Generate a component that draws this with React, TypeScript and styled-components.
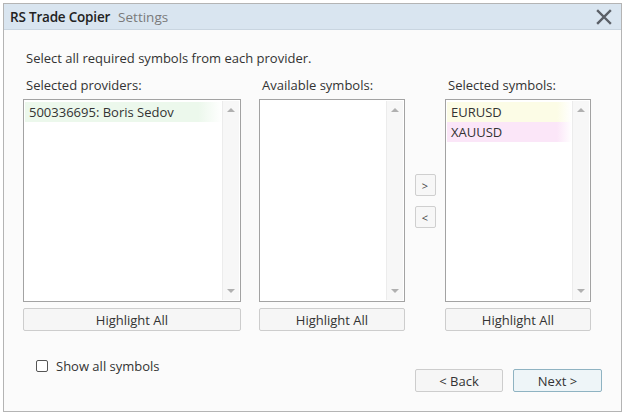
import React from "react";
import styled, { createGlobalStyle } from "styled-components";

const Global = createGlobalStyle`
  html, body { margin: 0; padding: 0; background: #ffffff; }
  body { font-family: "Open Sans", "Noto Sans", sans-serif; color: #333; }
  * { box-sizing: border-box; }
`;

const Window = styled.div`
  margin: 3px;
  width: 619px;
  height: 409px;
  border: 1px solid #b4b4b4;
  background: #fbfbfb;
  display: flex;
  flex-direction: column;
`;

const TitleBar = styled.div`
  height: 26px;
  background: #d9e5f0;
  border-bottom: 1px solid #c9d5e0;
  display: flex;
  align-items: center;
  padding: 0 6px 0 6px;
  gap: 8px;
`;

const AppName = styled.span`
  font-size: 13.5px;
  font-weight: 600;
  color: #222;
  letter-spacing: -0.2px;
`;

const Section = styled.span`
  font-size: 13.5px;
  color: #7a7a7a;
  flex: 1;
`;

const CloseBtn = styled.svg`
  width: 16px;
  height: 16px;
  margin-right: 3px;
`;

const Body = styled.div`
  flex: 1;
  padding: 19px 19px 19px 19px;
  display: flex;
  flex-direction: column;
`;

const Instruction = styled.div`
  font-size: 13px;
  padding-left: 3px;
  line-height: 17px;
  margin-top: 1px;
  margin-bottom: 9px;
`;

const Grid = styled.div`
  display: grid;
  grid-template-columns: 218px 18px 146px 40px 146px;
  grid-template-rows: 17px 203px 23px;
  row-gap: 6px;
`;

const Label = styled.div<{ $col: number }>`
  grid-column: ${(p) => p.$col};
  grid-row: 1;
  font-size: 13px;
  line-height: 17px;
  padding-left: 3px;
  align-self: end;
  margin-bottom: -1px;
`;

const ListBox = styled.div<{ $col: number }>`
  grid-column: ${(p) => p.$col};
  grid-row: 2;
  border: 1px solid #a3a3a3;
  background: #fff;
  display: flex;
  padding: 2px 1px 1px 1px;
`;

const Items = styled.div`
  flex: 1;
  display: flex;
  flex-direction: column;
`;

const Item = styled.div<{ $bg: string }>`
  height: 20px;
  line-height: 20px;
  font-size: 13px;
  padding-left: 4px;
  color: #333;
  background: linear-gradient(to right, ${(p) => p.$bg} 88%, ${(p) => p.$bg}00 100%);
`;

const ScrollBar = styled.div`
  width: 17px;
  margin: -1px 0 0 0;
  border-left: 1px solid #ececec;
  background: #f7f7f7;
  display: flex;
  flex-direction: column;
  justify-content: space-between;
  align-items: center;
  padding: 7px 0 7px 0;
`;

const Tri = styled.div<{ $up?: boolean }>`
  width: 0;
  height: 0;
  border-left: 4px solid transparent;
  border-right: 4px solid transparent;
  ${(p) =>
    p.$up
      ? "border-bottom: 4px solid #b0b0b0;"
      : "border-top: 4px solid #b0b0b0;"}
`;

const Arrows = styled.div`
  grid-column: 4;
  grid-row: 2;
  display: flex;
  flex-direction: column;
  align-items: center;
  justify-content: center;
  gap: 10px;
  padding-top: 1px;
`;

const SmallBtn = styled.div`
  width: 21px;
  height: 22px;
  border: 1px solid #cfcfcf;
  background: #f7f7f7;
  border-radius: 2px;
  font-size: 11px;
  color: #444;
  display: flex;
  align-items: center;
  justify-content: center;
`;

const HighlightBtn = styled.div<{ $col: number }>`
  grid-column: ${(p) => p.$col};
  grid-row: 3;
  border: 1px solid #cdcdcd;
  background: #f6f6f6;
  border-radius: 2px;
  font-size: 13px;
  color: #333;
  display: flex;
  align-items: center;
  justify-content: center;
`;

const Footer = styled.div`
  margin-top: 28px;
  display: flex;
  align-items: flex-start;
`;

const CheckRow = styled.label`
  display: flex;
  align-items: center;
  gap: 8px;
  margin-left: 13px;
  margin-top: -2px;
  font-size: 13px;
  flex: 1;
`;

const Box = styled.span`
  width: 12px;
  height: 12px;
  border: 1px solid #555;
  border-radius: 2px;
  background: #fff;
`;

const NavButtons = styled.div`
  display: flex;
  gap: 10px;
  margin-top: 10px;
`;

const NavBtn = styled.div<{ $primary?: boolean }>`
  width: ${(p) => (p.$primary ? 89 : 88)}px;
  height: 23px;
  border: 1px solid ${(p) => (p.$primary ? "#8fb3c2" : "#cdcdcd")};
  background: ${(p) => (p.$primary ? "#eef5f8" : "#f6f6f6")};
  border-radius: 2px;
  font-size: 13px;
  color: #333;
  display: flex;
  align-items: center;
  justify-content: center;
`;

const List: React.FC<{ col: number; items?: { t: string; bg: string }[] }> = ({ col, items = [] }) => (
  <ListBox $col={col}>
    <Items>
      {items.map((i) => (
        <Item key={i.t} $bg={i.bg}>
          {i.t}
        </Item>
      ))}
    </Items>
    <ScrollBar>
      <Tri $up />
      <Tri />
    </ScrollBar>
  </ListBox>
);

export default function App() {
  return (
    <>
      <Global />
      <Window>
        <TitleBar>
          <AppName>RS Trade Copier</AppName>
          <Section>Settings</Section>
          <CloseBtn viewBox="0 0 16 16">
            <path d="M2 2 L14 14 M14 2 L2 14" stroke="#5a5f66" strokeWidth="2.4" strokeLinecap="square" />
          </CloseBtn>
        </TitleBar>
        <Body>
          <Instruction>Select all required symbols from each provider.</Instruction>
          <Grid>
            <Label $col={1}>Selected providers:</Label>
            <Label $col={3}>Available symbols:</Label>
            <Label $col={5}>Selected symbols:</Label>
            <List col={1} items={[{ t: "500336695: Boris Sedov", bg: "#ecf8ec" }]} />
            <List col={3} />
            <Arrows>
              <SmallBtn>&gt;</SmallBtn>
              <SmallBtn>&lt;</SmallBtn>
            </Arrows>
            <List
              col={5}
              items={[
                { t: "EURUSD", bg: "#fcfce6" },
                { t: "XAUUSD", bg: "#fbe6f8" },
              ]}
            />
            <HighlightBtn $col={1}>Highlight All</HighlightBtn>
            <HighlightBtn $col={3}>Highlight All</HighlightBtn>
            <HighlightBtn $col={5}>Highlight All</HighlightBtn>
          </Grid>
          <Footer>
            <CheckRow>
              <Box />
              Show all symbols
            </CheckRow>
            <NavButtons>
              <NavBtn>&lt; Back</NavBtn>
              <NavBtn $primary>Next &gt;</NavBtn>
            </NavButtons>
          </Footer>
        </Body>
      </Window>
    </>
  );
}
